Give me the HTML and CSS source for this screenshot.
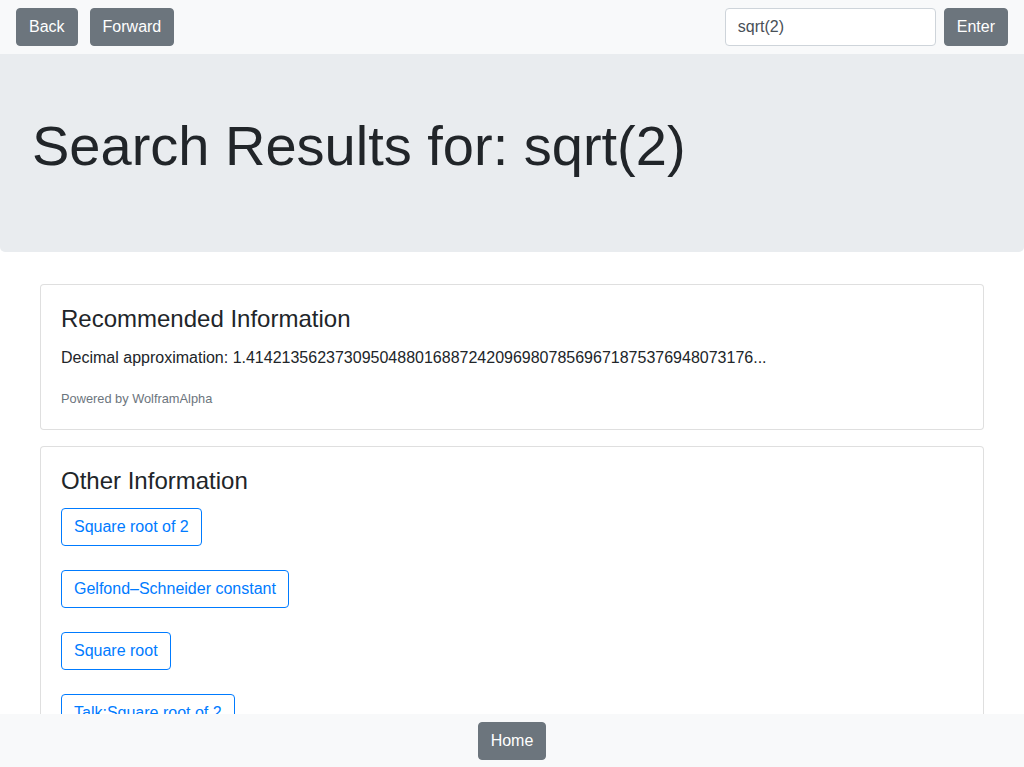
FILE: index.html
```html
<!DOCTYPE html>
<html lang="en">
<head>
<meta charset="utf-8">
<title>Search Results</title>
<link rel="stylesheet" href="styles.css">
</head>
<body>
<nav class="topbar">
  <div class="nav-left">
    <button class="btn btn-secondary">Back</button>
    <button class="btn btn-secondary">Forward</button>
  </div>
  <form class="search">
    <input class="search-input" type="text" value="sqrt(2)">
    <button class="btn btn-secondary" type="button">Enter</button>
  </form>
</nav>
<main class="page">
  <header class="jumbotron">
    <h1 class="display">Search Results for: sqrt(2)</h1>
  </header>
  <section class="results">
    <div class="card">
      <h4 class="card-title">Recommended Information</h4>
      <p class="card-text">Decimal approximation: 1.414213562373095048801688724209698078569671875376948073176...</p>
      <p class="card-text last"><small class="muted">Powered by WolframAlpha</small></p>
    </div>
    <div class="card">
      <h4 class="card-title">Other Information</h4>
      <div class="links">
        <a class="btn btn-outline">Square root of 2</a>
        <a class="btn btn-outline">Gelfond–Schneider constant</a>
        <a class="btn btn-outline">Square root</a>
        <a class="btn btn-outline">Talk:Square root of 2</a>
        <a class="btn btn-outline">Square root of 3</a>
        <a class="btn btn-outline">Square root of 5</a>
        <a class="btn btn-outline">Irrational number</a>
        <a class="btn btn-outline">Methods of computing square roots</a>
        <a class="btn btn-outline">Pythagoras</a>
        <a class="btn btn-outline">Silver ratio</a>
      </div>
    </div>
  </section>
</main>
<footer class="bottombar">
  <button class="btn btn-secondary">Home</button>
</footer>
</body>
</html>
```

FILE: styles.css
```css
* { box-sizing: border-box; }
html, body {
  margin: 0;
  padding: 0;
}
body {
  font-family: "Liberation Sans", Arial, sans-serif;
  font-size: 16px;
  line-height: 1.5;
  color: #212529;
  background: #fff;
}
.topbar {
  position: fixed;
  top: 0;
  left: 0;
  right: 0;
  height: 54px;
  padding: 8px 16px;
  background: #f8f9fa;
  display: flex;
  justify-content: space-between;
  align-items: center;
  z-index: 10;
}
.nav-left {
  display: flex;
  gap: 12px;
}
.search {
  display: flex;
  gap: 8px;
  margin: 0;
}
.search-input {
  width: 211px;
  height: 38px;
  padding: 6px 12px;
  font-family: inherit;
  font-size: 16px;
  line-height: 1.5;
  color: #495057;
  background: #fff;
  border: 1px solid #ced4da;
  border-radius: 4px;
  outline: none;
}
.btn {
  display: inline-block;
  font-family: inherit;
  font-size: 16px;
  line-height: 1.5;
  font-weight: 400;
  padding: 6px 12px;
  border: 1px solid transparent;
  border-radius: 4px;
  height: 38px;
  cursor: pointer;
  text-decoration: none;
  white-space: nowrap;
}
.btn-secondary {
  color: #fff;
  background: #6c757d;
  border-color: #6c757d;
}
.btn-outline {
  color: #007bff;
  background: transparent;
  border-color: #007bff;
}
.page {
  padding-top: 54px;
  padding-bottom: 60px;
}
.jumbotron {
  background: #e9ecef;
  padding: 58px 32px 73px;
  border-radius: 0 0 5px 5px;
  margin-bottom: 32px;
}
.display {
  margin: 0;
  font-size: 56px;
  font-weight: 300;
  line-height: 1.2;
}
.results {
  padding: 0 40px;
}
.card {
  border: 1px solid rgba(0,0,0,.125);
  border-radius: 4px;
  padding: 20px 20px 19px;
  margin-bottom: 16px;
  background: #fff;
}
.card-title {
  margin: 0 0 12px;
  font-size: 24px;
  font-weight: 400;
  line-height: 1.2;
}
.card-text {
  margin: 0 0 16px;
}
.card-text.last {
  margin-bottom: 0;
}
.muted {
  font-size: 80%;
  color: #6c757d;
}
.links {
  display: flex;
  flex-direction: column;
  align-items: flex-start;
  gap: 24px;
}
.bottombar {
  position: fixed;
  left: 0;
  right: 0;
  bottom: 0;
  height: 53px;
  padding-top: 8px;
  background: #f8f9fa;
  display: flex;
  justify-content: center;
  align-items: flex-start;
  z-index: 10;
}
```
